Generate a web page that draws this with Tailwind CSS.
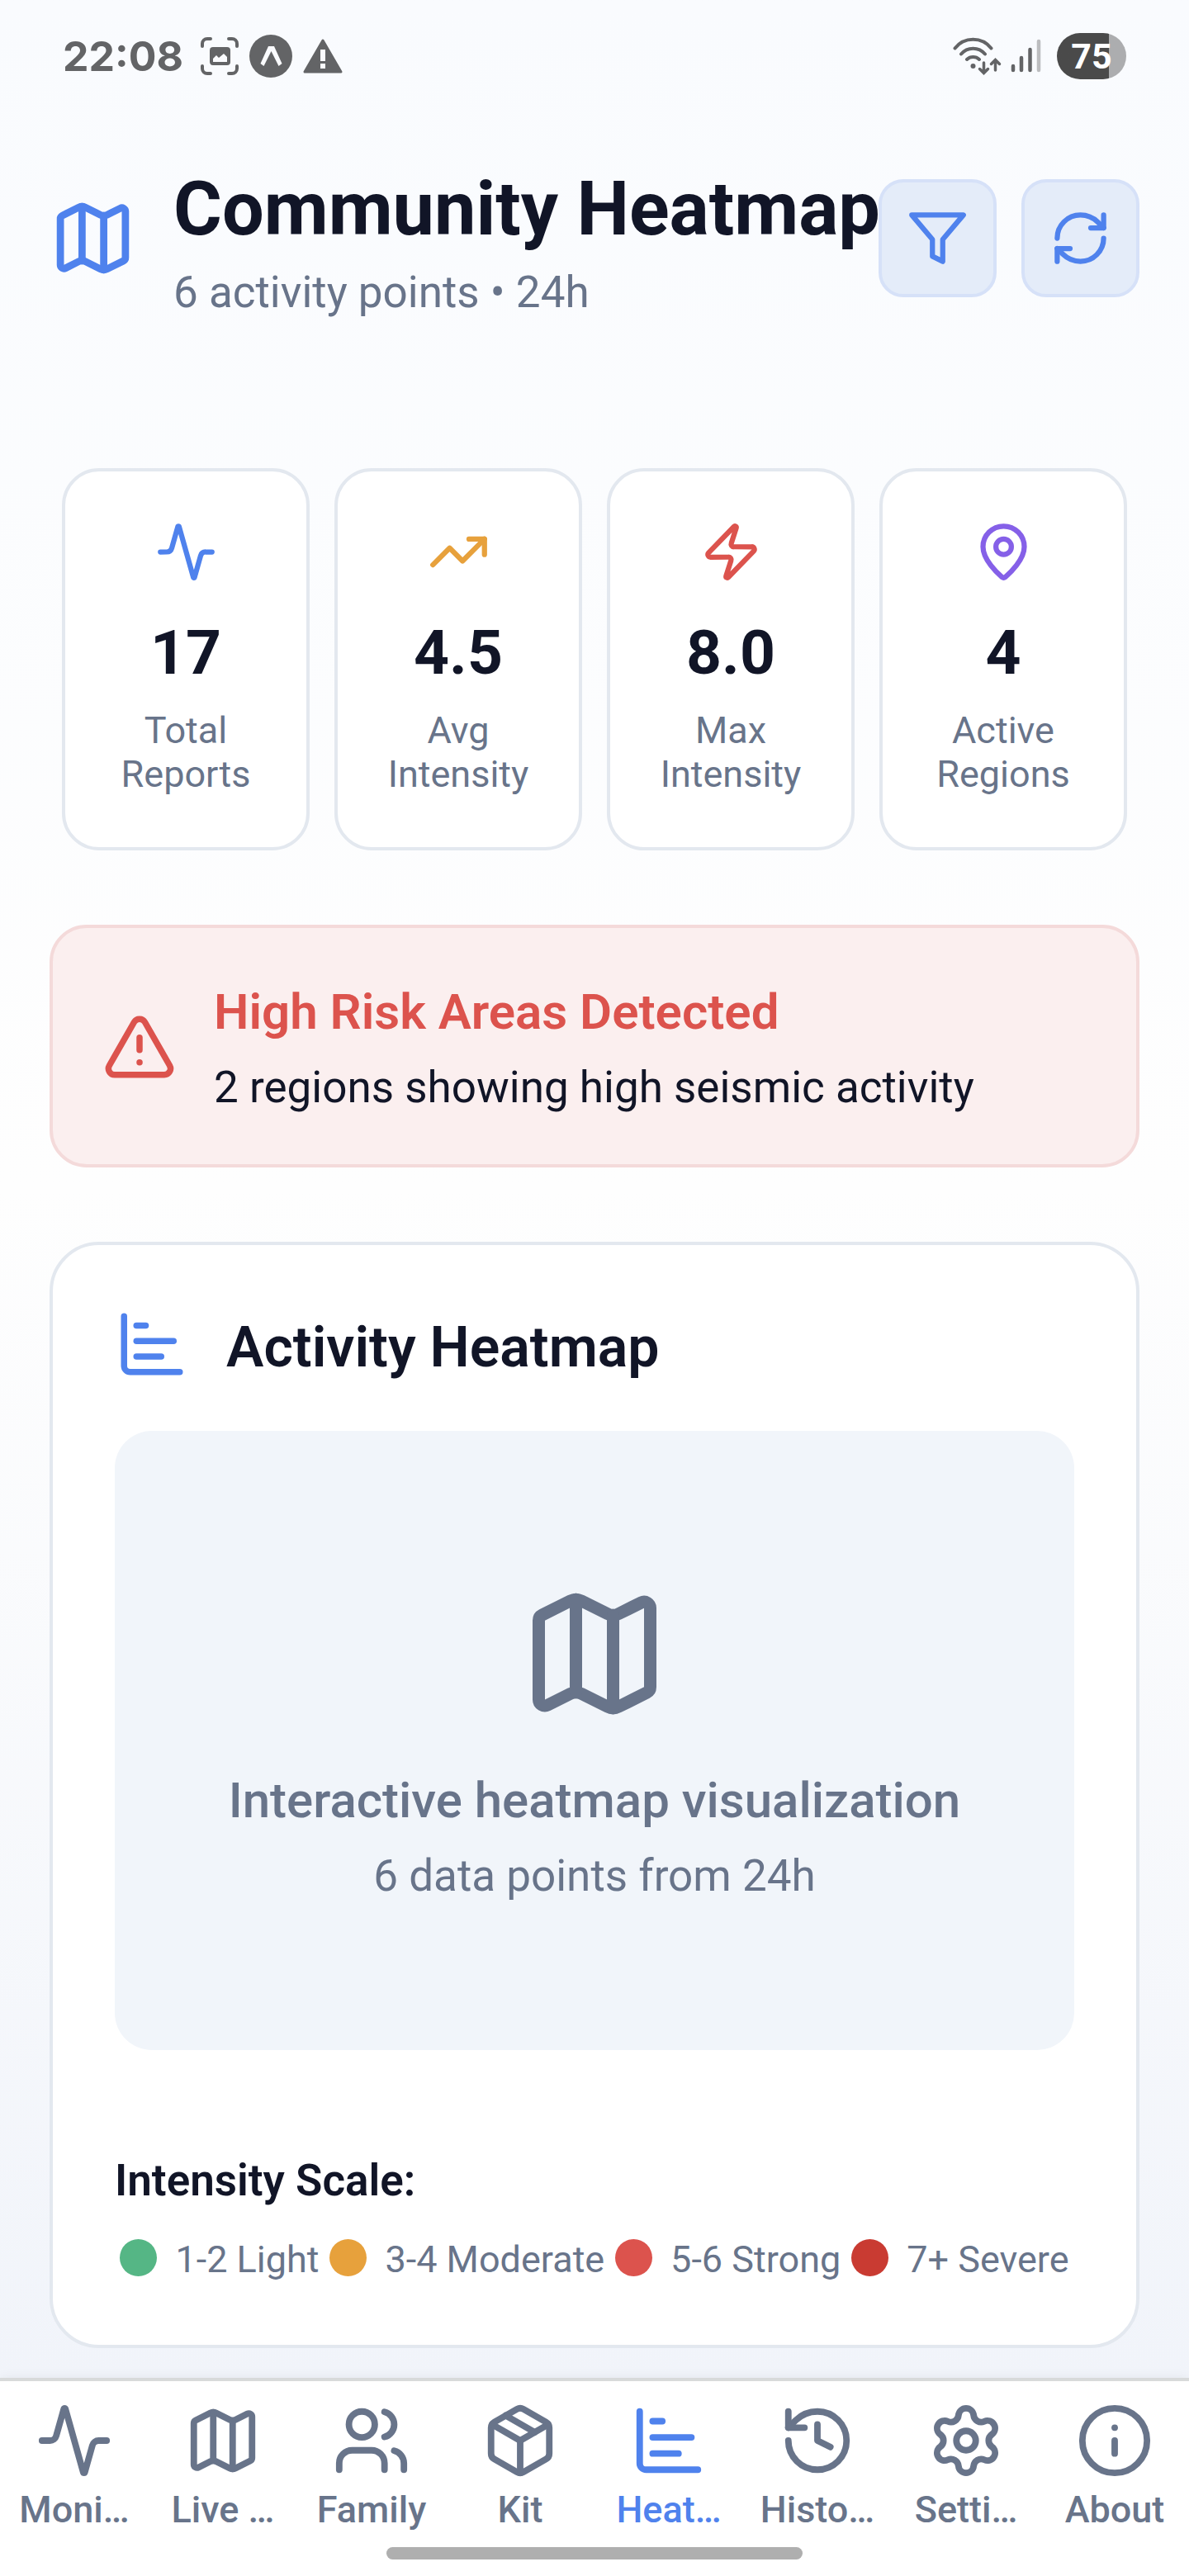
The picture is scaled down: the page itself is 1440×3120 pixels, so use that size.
<!DOCTYPE html>
<html lang="en">
<head>
    <meta charset="UTF-8">
    <meta name="viewport" content="width=device-width, initial-scale=1.0">
    <title>Community Heatmap</title>
    <script src="https://cdn.jsdelivr.net/npm/@tailwindcss/browser@4"></script>
</head>
<body class="min-h-screen flex flex-col bg-white text-[#111527] font-[Roboto,sans-serif]">

    <!-- Shared icons -->
    <svg class="hidden" aria-hidden="true">
        <symbol id="icon-map" viewBox="0 0 24 24">
            <path d="M14.106 5.553a2 2 0 0 0 1.788 0l3.659-1.83A1 1 0 0 1 21 4.619v12.764a1 1 0 0 1-.553.894l-4.553 2.277a2 2 0 0 1-1.788 0l-4.212-2.106a2 2 0 0 0-1.788 0l-3.659 1.83A1 1 0 0 1 3 19.381V6.618a1 1 0 0 1 .553-.894l4.553-2.277a2 2 0 0 1 1.788 0z"/>
            <path d="M15 5.764v15"/>
            <path d="M9 3.236v15"/>
        </symbol>
        <symbol id="icon-activity" viewBox="0 0 24 24">
            <path d="M22 12h-2.48a2 2 0 0 0-1.93 1.46l-2.35 8.36a.25.25 0 0 1-.48 0L9.24 2.18a.25.25 0 0 0-.48 0l-2.35 8.36A2 2 0 0 1 4.49 12H2"/>
        </symbol>
        <symbol id="icon-chart" viewBox="0 0 24 24">
            <path d="M3 3v16a2 2 0 0 0 2 2h16"/>
            <path d="M7 6h3"/>
            <path d="M7 11h12"/>
            <path d="M7 16h8"/>
        </symbol>
    </svg>

    <main class="grow bg-linear-to-b from-[#f9fbfe] via-[#fefefe] to-[#f1f4fa]">

        <!-- Status bar -->
        <div class="flex items-center justify-between px-[76px] pt-10 text-[#636466]">
            <div class="flex items-center">
                <span class="font-[Inter,sans-serif] text-[50px] leading-14 font-bold">22:08</span>
                <svg class="ml-5 w-12 h-12" viewBox="0 0 48 48" fill="none" stroke="currentColor" stroke-width="4" stroke-linecap="round">
                    <path d="M3 12V9a6 6 0 0 1 6-6h4M35 3h4a6 6 0 0 1 6 6v3M45 36v3a6 6 0 0 1-6 6h-4M13 45H9a6 6 0 0 1-6-6v-3"/>
                    <rect x="12" y="13" width="25" height="22" rx="4" fill="currentColor" stroke="none"/>
                    <path d="M16 31v-4l4-4 3 3 6-5 4 4v6z" fill="#fafbfe" stroke="none"/>
                </svg>
                <svg class="ml-3 w-[52px] h-[52px]" viewBox="0 0 52 52">
                    <circle cx="26" cy="26" r="26" fill="currentColor"/>
                    <path d="M23 14h7l9.500 21-4 3-9-18-9 18-4-3z" fill="#fafbfe"/>
                </svg>
                <svg class="ml-3 w-[50px] h-[50px]" viewBox="0 0 50 50">
                    <path d="M25 6 47 44H3z" fill="currentColor" stroke="currentColor" stroke-width="3" stroke-linejoin="round"/>
                    <path d="M22 17h6v14h-6zM22 34h6v6h-6z" fill="#fafbfe"/>
                </svg>
            </div>
            <div class="flex items-center">
                <svg class="w-[62px] h-12" viewBox="0 0 62 48" fill="none" stroke="currentColor" stroke-width="4" stroke-linecap="round">
                    <path d="M2.500 14.500a28 28 0 0 1 44 0M10 21.500a19 19 0 0 1 29 0M17 28a11 11 0 0 1 15 0"/>
                    <circle cx="24.500" cy="36" r="3" fill="currentColor" stroke="none"/>
                    <path d="M37.500 32v12M32.500 39.500l5 5 5-5M51.500 41V29M46.500 33.500l5-5 5 5" stroke-width="3.500"/>
                </svg>
                <svg class="ml-2 w-10 h-12" viewBox="0 0 40 48" fill="none" stroke="currentColor" stroke-width="4.500" stroke-linecap="round">
                    <path d="M3 36v5M13 26v15M23.500 16v25"/>
                    <path d="M34 6v35" stroke="#bcbdbf"/>
                </svg>
                <div class="ml-4 w-21 h-14 rounded-full bg-linear-to-r from-[#4a4a4a] from-75% to-[#acadaf] to-75% text-white text-[43px] leading-14 font-bold text-center">75</div>
            </div>
        </div>

        <!-- Header -->
        <header class="flex items-center px-15 pt-[98px] pb-[185px]">
            <svg class="shrink-0 w-[105px] h-[105px] text-[#4f82ed]" fill="none" stroke="currentColor" stroke-width="2" stroke-linecap="round" stroke-linejoin="round"><use href="#icon-map"/></svg>
            <div class="ml-[45px] flex-1 min-w-0 whitespace-nowrap">
                <h1 class="text-[90px] leading-30 font-bold">Community Heatmap</h1>
                <p class="mt-3 text-[53px] leading-14 text-[#68748a]">6 activity points • 24h</p>
            </div>
            <div class="flex gap-[30px] text-[#4f82ed]">
                <button type="button" aria-label="Filter" class="flex items-center justify-center w-[143px] h-[143px] rounded-[30px] border-4 border-[#d6e1f8] bg-[#e4ecf9]">
                    <svg class="w-[75px] h-[75px]" viewBox="0 0 24 24" fill="none" stroke="currentColor" stroke-width="2" stroke-linecap="round" stroke-linejoin="round"><path d="M22 3H2l8 9.460V19l4 2v-8.540z"/></svg>
                </button>
                <button type="button" aria-label="Refresh" class="flex items-center justify-center w-[143px] h-[143px] rounded-[30px] border-4 border-[#d6e1f8] bg-[#e4ecf9]">
                    <svg class="w-[75px] h-[75px]" viewBox="0 0 24 24" fill="none" stroke="currentColor" stroke-width="2" stroke-linecap="round" stroke-linejoin="round">
                        <path d="M3 12a9 9 0 0 1 9-9 9.750 9.750 0 0 1 6.740 2.740L21 8"/>
                        <path d="M21 3v5h-5"/>
                        <path d="M21 12a9 9 0 0 1-9 9 9.750 9.750 0 0 1-6.740-2.740L3 16"/>
                        <path d="M8 16H3v5"/>
                    </svg>
                </button>
            </div>
        </header>

        <!-- Stats -->
        <section class="grid grid-cols-4 gap-[30px] px-[75px] text-center">
            <div class="flex flex-col items-center rounded-[45px] border-4 border-[#e3e8ef] bg-white pt-15 pb-[62px]">
                <svg class="w-[75px] h-[75px] text-[#4f82ed]" fill="none" stroke="currentColor" stroke-width="2" stroke-linecap="round" stroke-linejoin="round"><use href="#icon-activity"/></svg>
                <p class="mt-10 text-[75px] leading-22 font-bold">17</p>
                <p class="mt-6 text-[45px] leading-[53px] text-[#68748a]">Total<br>Reports</p>
            </div>
            <div class="flex flex-col items-center rounded-[45px] border-4 border-[#e3e8ef] bg-white pt-15 pb-[62px]">
                <svg class="w-[75px] h-[75px] text-[#e7a13c]" viewBox="0 0 24 24" fill="none" stroke="currentColor" stroke-width="2" stroke-linecap="round" stroke-linejoin="round">
                    <path d="M16 7h6v6"/>
                    <path d="m22 7-8.500 8.500-5-5L2 17"/>
                </svg>
                <p class="mt-10 text-[75px] leading-22 font-bold">4.5</p>
                <p class="mt-6 text-[45px] leading-[53px] text-[#68748a]">Avg<br>Intensity</p>
            </div>
            <div class="flex flex-col items-center rounded-[45px] border-4 border-[#e3e8ef] bg-white pt-15 pb-[62px]">
                <svg class="w-[75px] h-[75px] text-[#dc534d]" viewBox="0 0 24 24" fill="none" stroke="currentColor" stroke-width="2" stroke-linecap="round" stroke-linejoin="round">
                    <path d="M4 14a1 1 0 0 1-.780-1.630l9.900-10.200a.5.5 0 0 1 .860.460l-1.920 6.020A1 1 0 0 0 13 10h7a1 1 0 0 1 .780 1.630l-9.900 10.200a.5.5 0 0 1-.860-.460l1.920-6.020A1 1 0 0 0 11 14z"/>
                </svg>
                <p class="mt-10 text-[75px] leading-22 font-bold">8.0</p>
                <p class="mt-6 text-[45px] leading-[53px] text-[#68748a]">Max<br>Intensity</p>
            </div>
            <div class="flex flex-col items-center rounded-[45px] border-4 border-[#e3e8ef] bg-white pt-15 pb-[62px]">
                <svg class="w-[75px] h-[75px] text-[#8560e8]" viewBox="0 0 24 24" fill="none" stroke="currentColor" stroke-width="2" stroke-linecap="round" stroke-linejoin="round">
                    <path d="M20 10c0 4.993-5.539 10.193-7.399 11.799a1 1 0 0 1-1.202 0C9.539 20.193 4 14.993 4 10a8 8 0 0 1 16 0"/>
                    <circle cx="12" cy="10" r="3"/>
                </svg>
                <p class="mt-10 text-[75px] leading-22 font-bold">4</p>
                <p class="mt-6 text-[45px] leading-[53px] text-[#68748a]">Active<br>Regions</p>
            </div>
        </section>

        <!-- Risk alert -->
        <section class="mx-15 mt-[90px] flex items-center rounded-[45px] border-4 border-[#f4dada] bg-[#fbefef] px-15 pt-16 pb-[62px]">
            <svg class="shrink-0 w-[90px] h-[90px] text-[#dc534d]" viewBox="0 0 24 24" fill="none" stroke="currentColor" stroke-width="2" stroke-linecap="round" stroke-linejoin="round">
                <path d="m21.730 18-8-14a2 2 0 0 0-3.480 0l-8 14A2 2 0 0 0 4 21h16a2 2 0 0 0 1.730-3"/>
                <path d="M12 9v4"/>
                <path d="M12 17h.01"/>
            </svg>
            <div class="ml-[45px]">
                <h2 class="text-[60px] leading-19 font-semibold text-[#dc534d]">High Risk Areas Detected</h2>
                <p class="mt-[22px] text-[53px] leading-[62px]">2 regions showing high seismic activity</p>
            </div>
        </section>

        <!-- Heatmap card -->
        <section class="mx-15 mt-[90px] mb-[35px] rounded-[60px] border-4 border-[#e3e8ef] bg-white px-[75px] pt-[75px] pb-[77px]">
            <div class="flex items-center">
                <svg class="w-[90px] h-[90px] text-[#4f82ed]" fill="none" stroke="currentColor" stroke-width="2" stroke-linecap="round" stroke-linejoin="round"><use href="#icon-chart"/></svg>
                <h2 class="ml-[45px] pt-2 text-[68px] leading-20 font-semibold">Activity Heatmap</h2>
            </div>
            <div class="mt-15 h-[750px] flex flex-col items-center justify-center rounded-[45px] bg-[#f1f5fa] text-[#68748a]">
                <svg class="w-[180px] h-[180px]" fill="none" stroke="currentColor" stroke-width="2" stroke-linecap="round" stroke-linejoin="round"><use href="#icon-map"/></svg>
                <p class="mt-[53px] text-[60px] leading-[70px] font-medium">Interactive heatmap visualization</p>
                <p class="mt-[25px] text-[53px] leading-[62px]">6 data points from 24h</p>
            </div>
            <h3 class="mt-[127px] text-[53px] leading-[62px] font-semibold">Intensity Scale:</h3>
            <ul class="mt-[34px] flex justify-around text-[45px] leading-[53px] text-[#68748a] whitespace-nowrap">
                <li class="flex items-center gap-[22px]"><span class="w-[45px] h-[45px] rounded-full bg-[#55b685]"></span><span class="pt-1">1-2 Light</span></li>
                <li class="flex items-center gap-[22px]"><span class="w-[45px] h-[45px] rounded-full bg-[#e7a13c]"></span><span class="pt-1">3-4 Moderate</span></li>
                <li class="flex items-center gap-[22px]"><span class="w-[45px] h-[45px] rounded-full bg-[#dc534d]"></span><span class="pt-1">5-6 Strong</span></li>
                <li class="flex items-center gap-[22px]"><span class="w-[45px] h-[45px] rounded-full bg-[#c93b32]"></span><span class="pt-1">7+ Severe</span></li>
            </ul>
        </section>
    </main>

    <!-- Bottom tabs -->
    <nav class="border-t-4 border-[#d8dada] bg-white pt-[25px] pb-5 shadow-[0_0_14px_rgba(0,0,0,0.06)]">
        <div class="grid grid-cols-8 text-[45px] leading-[53px] font-medium text-[#68748a] whitespace-nowrap">
            <a href="#monitor" class="flex flex-col items-center gap-[10px]">
                <svg class="w-[94px] h-[94px]" fill="none" stroke="currentColor" stroke-width="2" stroke-linecap="round" stroke-linejoin="round"><use href="#icon-activity"/></svg>
                <span>Moni…</span>
            </a>
            <a href="#live" class="flex flex-col items-center gap-[10px]">
                <svg class="w-[94px] h-[94px]" fill="none" stroke="currentColor" stroke-width="2" stroke-linecap="round" stroke-linejoin="round"><use href="#icon-map"/></svg>
                <span>Live …</span>
            </a>
            <a href="#family" class="flex flex-col items-center gap-[10px]">
                <svg class="w-[94px] h-[94px]" viewBox="0 0 24 24" fill="none" stroke="currentColor" stroke-width="2" stroke-linecap="round" stroke-linejoin="round">
                    <path d="M16 21v-2a4 4 0 0 0-4-4H6a4 4 0 0 0-4 4v2"/>
                    <path d="M16 3.128a4 4 0 0 1 0 7.744"/>
                    <path d="M22 21v-2a4 4 0 0 0-3-3.870"/>
                    <circle cx="9" cy="7" r="4"/>
                </svg>
                <span>Family</span>
            </a>
            <a href="#kit" class="flex flex-col items-center gap-[10px]">
                <svg class="w-[94px] h-[94px]" viewBox="0 0 24 24" fill="none" stroke="currentColor" stroke-width="2" stroke-linecap="round" stroke-linejoin="round">
                    <path d="M11 21.730a2 2 0 0 0 2 0l7-4A2 2 0 0 0 21 16V8a2 2 0 0 0-1-1.730l-7-4a2 2 0 0 0-2 0l-7 4A2 2 0 0 0 3 8v8a2 2 0 0 0 1 1.730z"/>
                    <path d="M12 22V12"/>
                    <path d="M3.290 7 12 12l8.710-5"/>
                    <path d="m7.500 4.270 9 5.150"/>
                </svg>
                <span>Kit</span>
            </a>
            <a href="#heatmap" aria-current="page" class="flex flex-col items-center gap-[10px] text-[#4f82ed]">
                <svg class="w-[94px] h-[94px]" fill="none" stroke="currentColor" stroke-width="2" stroke-linecap="round" stroke-linejoin="round"><use href="#icon-chart"/></svg>
                <span>Heat…</span>
            </a>
            <a href="#history" class="flex flex-col items-center gap-[10px]">
                <svg class="w-[94px] h-[94px]" viewBox="0 0 24 24" fill="none" stroke="currentColor" stroke-width="2" stroke-linecap="round" stroke-linejoin="round">
                    <path d="M3 12a9 9 0 1 0 9-9 9.750 9.750 0 0 0-6.740 2.740L3 8"/>
                    <path d="M3 3v5h5"/>
                    <path d="M12 7v5l4 2"/>
                </svg>
                <span>Histo…</span>
            </a>
            <a href="#settings" class="flex flex-col items-center gap-[10px]">
                <svg class="w-[94px] h-[94px]" viewBox="0 0 24 24" fill="none" stroke="currentColor" stroke-width="2" stroke-linecap="round" stroke-linejoin="round">
                    <path d="M9.671 4.136a2.340 2.340 0 0 1 4.659 0 2.340 2.340 0 0 0 3.319 1.915 2.340 2.340 0 0 1 2.330 4.033 2.340 2.340 0 0 0 0 3.831 2.340 2.340 0 0 1-2.330 4.033 2.340 2.340 0 0 0-3.319 1.915 2.340 2.340 0 0 1-4.659 0 2.340 2.340 0 0 0-3.320-1.915 2.340 2.340 0 0 1-2.330-4.033 2.340 2.340 0 0 0 0-3.831A2.340 2.340 0 0 1 6.350 6.051a2.340 2.340 0 0 0 3.319-1.915"/>
                    <circle cx="12" cy="12" r="3"/>
                </svg>
                <span>Setti…</span>
            </a>
            <a href="#about" class="flex flex-col items-center gap-[10px]">
                <svg class="w-[94px] h-[94px]" viewBox="0 0 24 24" fill="none" stroke="currentColor" stroke-width="2" stroke-linecap="round" stroke-linejoin="round">
                    <circle cx="12" cy="12" r="10"/>
                    <path d="M12 16v-4"/>
                    <path d="M12 8h.01"/>
                </svg>
                <span>About</span>
            </a>
        </div>
        <div class="mx-auto mt-[19px] w-[35%] h-[15px] rounded-full bg-[#afafaf]"></div>
    </nav>
</body>
</html>
